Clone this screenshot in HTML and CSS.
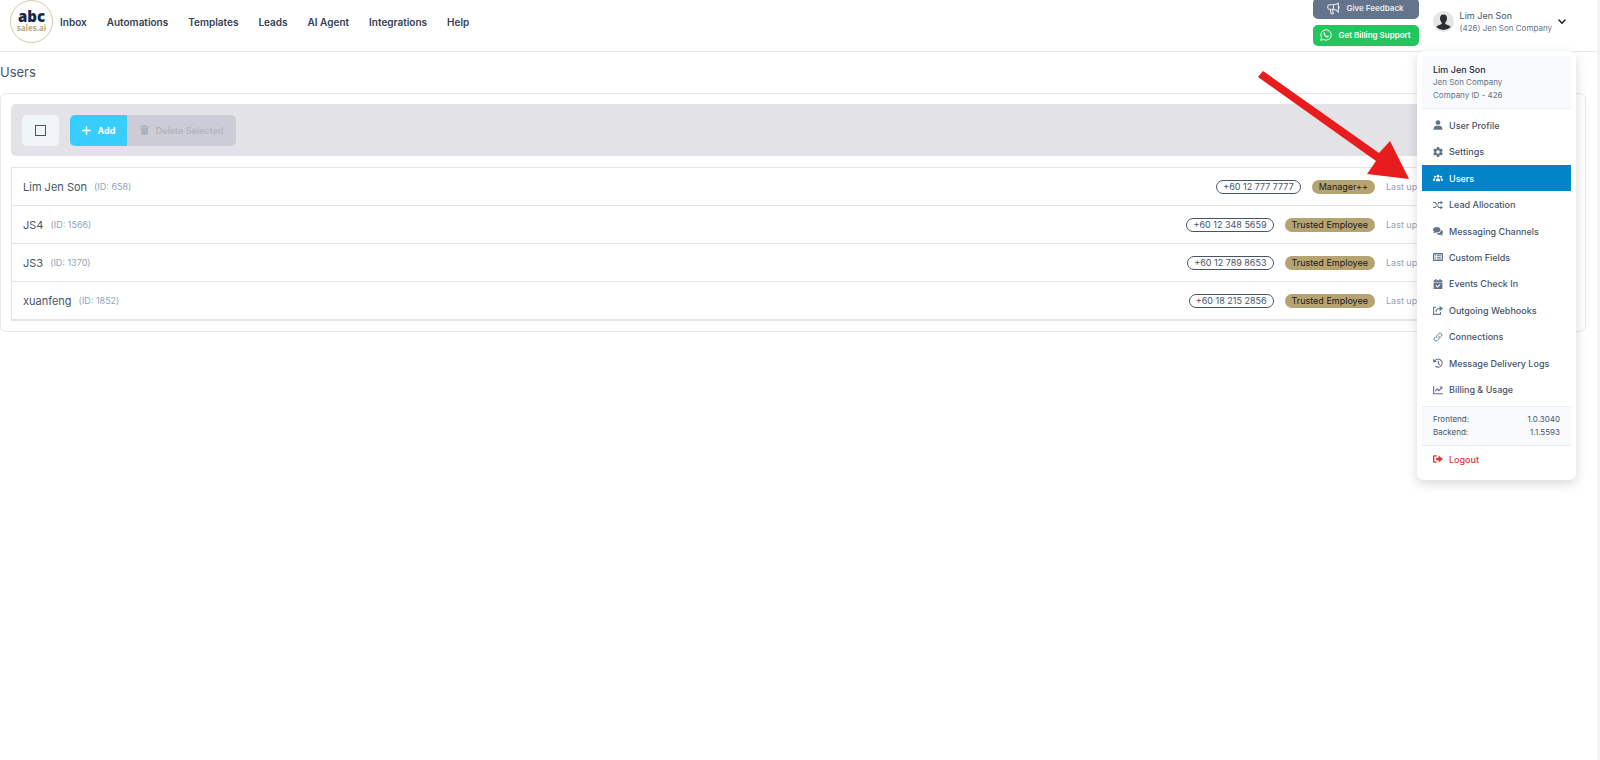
FILE: index.html
```html
<!DOCTYPE html>
<html lang="en">
<head>
    <meta charset="UTF-8">
    <meta name="viewport" content="width=device-width, initial-scale=1.0">
    <title>Users</title>
    <link rel="stylesheet" href="styles.css">
</head>
<body>
    <header class="header">
        <a href="#" class="logo"><span class="logo-top">abc</span><span class="logo-bottom">sales.ai</span></a>
        <nav class="nav">
            <a href="#">Inbox</a>
            <a href="#">Automations</a>
            <a href="#">Templates</a>
            <a href="#">Leads</a>
            <a href="#">AI Agent</a>
            <a href="#">Integrations</a>
            <a href="#">Help</a>
        </nav>
        <div class="support">
            <button type="button" class="btn-feedback">
                <svg width="13" height="13" viewBox="0 0 16 16" fill="none" stroke="currentColor" stroke-width="1.3" stroke-linejoin="round"><path d="M8 3.500H3a2 2 0 0 0-2 2v1.500a2 2 0 0 0 2 2h5M8 3.500c2.500 0 4.500-.7 6-2v11c-1.500-1.700-3.500-3.500-6-3.500zM4 9l1.200 5.500h2.500L6.800 9M14 5.500c1.300.3 1.300 2.200 0 2.500"/></svg>
                Give Feedback
            </button>
            <button type="button" class="btn-billing">
                <svg width="12" height="12" viewBox="0 0 16 16" fill="none" stroke="currentColor" stroke-width="1.3" stroke-linejoin="round"><path d="M1 15l1-3.700A6.900 6.900 0 1 1 4.700 14z"/><path d="M5.500 4.400l1 .1.700 1.700-.7 1c.6 1.100 1.400 1.900 2.500 2.400l.9-1 1.700.8c.1 1.200-.7 2-1.900 2C7.500 11.200 4.800 8.500 4.600 6.200c0-.8.4-1.500.9-1.800z" fill="currentColor" stroke="none"/></svg>
                Get Billing Support
            </button>
        </div>
        <button type="button" class="account">
            <svg class="avatar" width="21" height="21" viewBox="0 0 21 21"><circle cx="10.500" cy="10.500" r="10.500" fill="#e4e5e7"/><path d="M10.500 3.500c2.400 0 3.600 1.700 3.500 3.900-.1 1.900-.8 3.300-1.700 4v1.600l4.200 1.700c.6.3 1 .8 1 1.500a10.400 10.400 0 0 1-14 0c0-.7.400-1.200 1-1.500l4.200-1.700v-1.600c-.9-.7-1.600-2.100-1.700-4-.1-2.200 1.100-3.900 3.500-3.900z" fill="#2b2e35"/></svg>
            <span class="account-text">
                <span class="account-name">Lim Jen Son</span>
                <span class="account-company">(426) Jen Son Company</span>
            </span>
            <svg width="8" height="6" viewBox="0 0 8 6" fill="none" stroke="#1e293b" stroke-width="1.500" stroke-linecap="round" stroke-linejoin="round"><path d="M1 1l3 3.200L7 1"/></svg>
        </button>
    </header>

    <main>
        <h1>Users</h1>
        <section class="card">
            <div class="toolbar">
                <label class="select-all"><input type="checkbox" aria-label="Select all"></label>
                <div class="btn-group">
                    <button type="button" class="btn-add">
                        <svg width="9" height="9" viewBox="0 0 9 9" stroke="currentColor" stroke-width="1.500" stroke-linecap="round"><path d="M4.500 .8v7.400M.8 4.500h7.400"/></svg>
                        Add
                    </button>
                    <button type="button" class="btn-delete" disabled>
                        <svg width="9" height="10" viewBox="0 0 14 16" fill="currentColor"><path d="M0 1.500h4L4.800 0h4.400l.8 1.500h4v2H0zM1 4.500h12l-.8 10A1.600 1.600 0 0 1 10.700 16H3.300a1.600 1.600 0 0 1-1.500-1.500z"/></svg>
                        Delete Selected
                    </button>
                </div>
            </div>
            <ul class="users">
                <li>
                    <span class="name">Lim Jen Son</span><span class="id">(ID: 658)</span>
                    <span class="phone">+60 12 777 7777</span><span class="role">Manager++</span><span class="updated">Last updated</span>
                </li>
                <li>
                    <span class="name">JS4</span><span class="id">(ID: 1566)</span>
                    <span class="phone">+60 12 348 5659</span><span class="role">Trusted Employee</span><span class="updated">Last updated</span>
                </li>
                <li>
                    <span class="name">JS3</span><span class="id">(ID: 1370)</span>
                    <span class="phone">+60 12 789 8653</span><span class="role">Trusted Employee</span><span class="updated">Last updated</span>
                </li>
                <li>
                    <span class="name">xuanfeng</span><span class="id">(ID: 1852)</span>
                    <span class="phone">+60 18 215 2856</span><span class="role">Trusted Employee</span><span class="updated">Last updated</span>
                </li>
            </ul>
        </section>
    </main>

    <div class="menu">
        <div class="menu-head">
            <strong>Lim Jen Son</strong>
            <span>Jen Son Company</span>
            <span>Company ID - 426</span>
        </div>
        <nav class="menu-items">
            <a href="#"><svg viewBox="0 0 16 16" fill="currentColor"><circle cx="8" cy="4" r="3.800"/><path d="M1 15.500c0-4 1.500-6.500 4.500-6.500h5c3 0 4.500 2.500 4.500 6.500z"/></svg>User Profile</a>
            <a href="#"><svg viewBox="0 0 16 16" fill="currentColor" fill-rule="evenodd"><path d="M6.300 0h3.400l.5 2.300 1.500.9 2.300-.8 1.700 3-1.800 1.700v1.800l1.800 1.700-1.700 3-2.300-.8-1.500.9-.5 2.300H6.300l-.5-2.300-1.500-.9-2.300.8-1.700-3 1.800-1.700V7.100L.3 5.400l1.700-3 2.300.8 1.500-.9zM8 5.200a2.800 2.800 0 1 0 0 5.600 2.800 2.800 0 0 0 0-5.600z"/></svg>Settings</a>
            <a href="#" class="active"><svg viewBox="0 0 16 16" fill="currentColor"><circle cx="8" cy="5" r="2.300"/><circle cx="3" cy="6" r="1.600"/><circle cx="13" cy="6" r="1.600"/><path d="M4.500 13c0-3 1-4.700 3.500-4.700s3.500 1.700 3.500 4.700zM0 12.500c0-3 1-4.200 3.500-4.200l.6.200c-.8 1-1 2.300-1 4zM16 12.500c0-3-1-4.200-3.500-4.200l-.6.200c.8 1 1 2.300 1 4z"/></svg>Users</a>
            <a href="#"><svg viewBox="0 0 16 16" fill="none" stroke="currentColor" stroke-width="1.800"><path d="M0 4h3.500l6 8H13M0 12h3.500l1.700-2.300M7.800 6.300L9.500 4H13"/><path d="M12 1l4 3-4 3zM12 9l4 3-4 3z" fill="currentColor" stroke="none"/></svg>Lead Allocation</a>
            <a href="#"><svg viewBox="0 0 16 16" fill="currentColor"><path d="M6 1.500c3.300 0 6 2 6 4.500s-2.700 4.500-6 4.500c-.8 0-1.500-.1-2.200-.3-.8.500-2 1-3.600 1 .8-.8 1.300-1.700 1.400-2.300A4.200 4.200 0 0 1 0 6c0-2.500 2.700-4.500 6-4.500z"/><path d="M13 6.300c1.800.7 3 2 3 3.700 0 1-.5 2-1.300 2.800.1.700.5 1.500 1.200 2.200-1.400 0-2.600-.5-3.400-1-2.700.8-5.600-.1-6.800-2.300 4 .3 7.200-2 7.300-5.400z"/></svg>Messaging Channels</a>
            <a href="#"><svg viewBox="0 0 16 16" fill="currentColor" fill-rule="evenodd"><path d="M1.500 1.500h13A1.500 1.500 0 0 1 16 3v10a1.500 1.500 0 0 1-1.500 1.500h-13A1.500 1.500 0 0 1 0 13V3a1.500 1.500 0 0 1 1.500-1.500zM2 4v8.500h12V4zM3.200 5h1.600v1.500H3.200zm3 0h6.600v1.500H6.200zm-3 2.600h1.600v1.500H3.200zm3 0h6.600v1.500H6.200zm-3 2.600h1.600v1.500H3.200zm3 0h6.600v1.500H6.200z"/></svg>Custom Fields</a>
            <a href="#"><svg viewBox="0 0 16 16" fill="currentColor" fill-rule="evenodd"><path d="M1 2h2.800V0h2v2h4.400V0h2v2H15v3H1zM1 6h14v10H1zM4 10.800l3 3 5-4.800-1-1.200-4 3.800-1.900-1.900z"/></svg>Events Check In</a>
            <a href="#"><svg viewBox="0 0 16 16" fill="none" stroke="currentColor" stroke-width="1.700"><path d="M5 3.500H1V15h11v-4"/><path d="M5 11c-.5-3.500 1-5.500 6-5.500"/><path d="M10.500 1L16 5.500 10.500 10z" fill="currentColor" stroke="none"/></svg>Outgoing Webhooks</a>
            <a href="#"><svg viewBox="0 0 16 16" fill="none" stroke="currentColor" stroke-width="1.500" stroke-linecap="round"><path d="M6.500 9.500a3 3 0 0 1 0-4.200l3-3a3 3 0 0 1 4.200 4.200L12 8.200"/><path d="M9.500 6.500a3 3 0 0 1 0 4.200l-3 3a3 3 0 0 1-4.200-4.200L4 7.800"/></svg>Connections</a>
            <a href="#"><svg viewBox="0 0 16 16" fill="none" stroke="currentColor" stroke-width="1.700"><path d="M2.500 5A6.500 6.500 0 1 1 4 13.200M8.500 4.500V9l2.500 1.800"/><path d="M0 1l.5 6L6 6z" fill="currentColor" stroke="none"/></svg>Message Delivery Logs</a>
            <a href="#"><svg viewBox="0 0 16 16" fill="none" stroke="currentColor" stroke-width="1.800"><path d="M1 2v12h15M3.500 10l3-4 3 3 4-4.500"/><path d="M10.500 2.500H15V7z" fill="currentColor" stroke="none"/></svg>Billing &amp; Usage</a>
        </nav>
        <dl class="versions">
            <dt>Frontend:</dt><dd>1.0.3040</dd>
            <dt>Backend:</dt><dd>1.1.5593</dd>
        </dl>
        <a href="#" class="logout"><svg viewBox="0 0 16 16" fill="currentColor"><path d="M6 2v2H2.200v8H6v2H1.500A1.500 1.500 0 0 1 0 12.500v-9A1.500 1.500 0 0 1 1.500 2zM5 6h4V2.500L16 8l-7 5.500V10H5z"/></svg>Logout</a>
    </div>

    <svg class="arrow" width="153" height="110" viewBox="0 0 153 110"><path d="M6 1l116 82 11-12 19 38-42-5 9-13L1 7z" fill="#e81c1c"/></svg>
</body>
</html>
```
FILE: styles.css
```css
* {
    box-sizing: border-box;
}
body {
    margin: 0;
    min-height: 100vh;
    position: relative;
    background: #fff;
    border-right: 3px solid #f3f3f4;
    font-family: Inter, "Liberation Sans", sans-serif;
    font-size: 9px;
    color: #475569;
}
a {
    color: inherit;
    text-decoration: none;
}
button {
    font: inherit;
    color: inherit;
    border: 0;
    padding: 0;
    background: none;
    cursor: pointer;
}

/* top bar */
.header {
    height: 52px;
    padding: 0 31px 8px 10px;
    border-bottom: 1px solid #e8e8ea;
    display: flex;
    align-items: center;
}
.logo {
    width: 43px;
    height: 43px;
    border: 1px solid #d5c9ac;
    border-radius: 50%;
    display: flex;
    flex-direction: column;
    align-items: center;
    justify-content: center;
    font-family: "Open Sans", sans-serif;
    line-height: 11px;
}
.logo-top {
    font-size: 15px;
    font-weight: 800;
    color: #14284b;
}
.logo-bottom {
    font-size: 8px;
    font-weight: 700;
    color: #bba878;
}
.nav {
    display: flex;
    gap: 20px;
    margin-left: 7px;
    font-size: 10px;
    font-weight: 600;
    color: #334155;
}
.support {
    margin-left: auto;
    display: flex;
    flex-direction: column;
    gap: 6px;
}
.support button {
    width: 106px;
    height: 21px;
    border-radius: 5px;
    display: flex;
    align-items: center;
    justify-content: center;
    gap: 6px;
    color: #fff;
    font-size: 8px;
    font-weight: 600;
    white-space: nowrap;
}
.support .btn-feedback {
    background: #64748b;
    color: #e8ebf0;
}
.support .btn-billing {
    background: #22c55e;
}
.account {
    margin-left: 14px;
    display: flex;
    align-items: center;
    gap: 6px;
    text-align: left;
}
.account-text {
    display: flex;
    flex-direction: column;
    line-height: 12px;
}
.account-company {
    font-size: 8px;
    color: #64748b;
}

/* page */
h1 {
    margin: 0;
    padding: 10px 0 11px;
    font-size: 13px;
    line-height: 20px;
    font-weight: 400;
}
.card {
    margin-right: 11px;
    padding: 10px;
    border: 1px solid #e8e8ea;
    border-radius: 6px;
}
.toolbar {
    height: 52px;
    padding: 0 11px;
    display: flex;
    align-items: center;
    gap: 11px;
    background: #e3e2e7;
    border-radius: 5px;
}
.select-all {
    width: 37px;
    height: 31px;
    border-radius: 5px;
    background: #f1f5f9;
    display: flex;
    align-items: center;
    justify-content: center;
}
.select-all input {
    appearance: none;
    width: 11px;
    height: 11px;
    margin: 0;
    border: 1px solid #475569;
}
.btn-group {
    height: 31px;
    display: flex;
    border-radius: 5px;
    overflow: hidden;
}
.btn-group button {
    display: flex;
    align-items: center;
    justify-content: center;
    gap: 7px;
    font-weight: 500;
}
.btn-group .btn-add {
    width: 57px;
    background: #38cdff;
    color: #fff;
    font-weight: 700;
}
.btn-group .btn-delete {
    width: 109px;
    background: #cbccd6;
    color: #aeb2be;
}
.users {
    list-style: none;
    margin: 11px 0 0;
    padding: 0;
    border: 1px solid #e2e5ea;
    border-bottom-width: 2px;
}
.users li {
    height: 37px;
    padding: 0 11px;
    display: flex;
    align-items: center;
}
.users li + li {
    height: 38px;
    border-top: 1px solid #e2e5ea;
}
.name {
    font-size: 11px;
}
.id {
    margin-left: 7px;
    color: #94a3b8;
}
.phone {
    margin-left: auto;
    padding: 0 6px;
    border: 1px solid #475569;
    border-radius: 7px;
    line-height: 12px;
}
.role {
    margin: 0 11px;
    padding: 0 7px;
    border-radius: 7px;
    background: #b6a372;
    color: #1c1917;
    line-height: 14px;
}
.updated {
    width: 177px;
    color: #94a3b8;
}

/* account menu */
.menu {
    position: absolute;
    top: 51px;
    right: 21px;
    width: 159px;
    padding: 5px 5px 8px;
    background: #fff;
    border-radius: 7px;
    box-shadow: 0 4px 12px rgba(0, 0, 0, 0.15);
}
.menu-head {
    padding: 7px 11px 6px;
    display: flex;
    flex-direction: column;
    line-height: 13px;
    font-size: 8px;
    color: #64748b;
    background: #f8fafc;
    border-bottom: 1px solid #eceff3;
}
.menu-head strong {
    font-size: 9px;
    font-weight: 500;
    color: #1e293b;
}
.menu-items {
    height: 297px;
    padding: 3px 0;
    display: grid;
    grid-auto-rows: 1fr;
    font-weight: 500;
}
.menu-items a,
.logout {
    padding: 0 11px;
    display: flex;
    align-items: center;
    gap: 6px;
}
.menu-items svg,
.logout svg {
    width: 10px;
    height: 10px;
    flex: none;
}
.menu-items svg {
    color: #64748b;
}
.menu-items .active,
.menu-items .active svg {
    background: #0284c7;
    color: #fff;
}
.versions {
    margin: 0;
    padding: 6px 11px;
    display: grid;
    grid-template-columns: 1fr auto;
    line-height: 13px;
    font-size: 8px;
    background: #f8fafc;
    border: 1px solid #eceff3;
    border-width: 1px 0;
}
.versions dd {
    margin: 0;
    text-align: right;
}
.logout {
    height: 26px;
    font-weight: 500;
    color: #dc3a3a;
}

.arrow {
    position: absolute;
    top: 70px;
    right: 187px;
}
```
